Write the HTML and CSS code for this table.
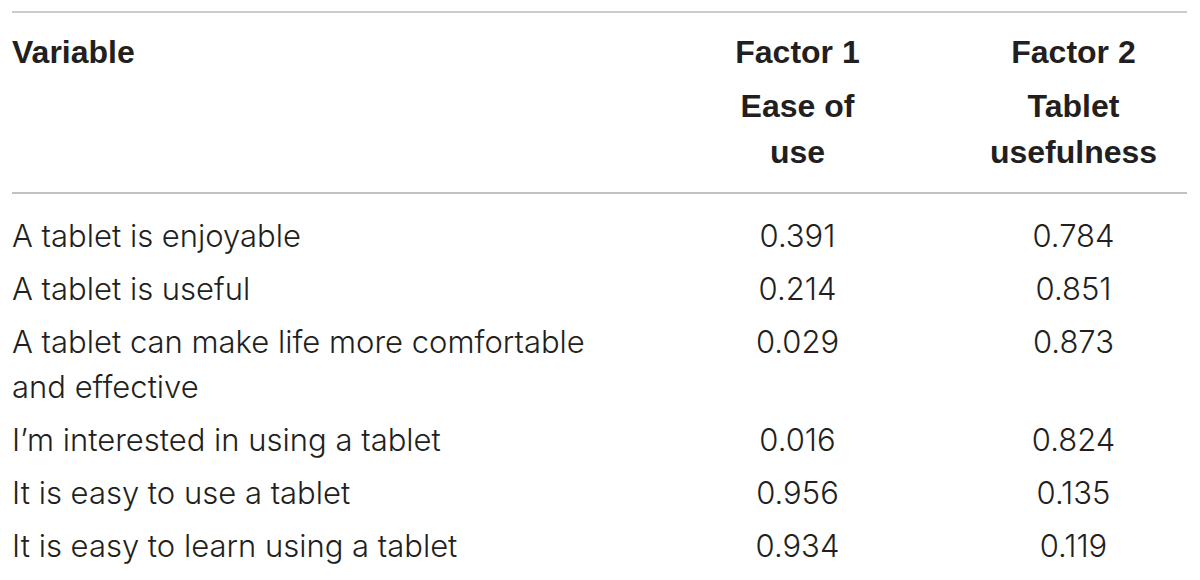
FILE: index.html
```html
<!DOCTYPE html>
<html lang="en">
<head>
<meta charset="utf-8">
<title>Factor loadings</title>
<link rel="stylesheet" href="styles.css">
</head>
<body>
<table class="loadings">
  <colgroup>
    <col class="col-var">
    <col class="col-f1">
    <col class="col-f2">
  </colgroup>
  <thead>
    <tr class="head-top">
      <th class="var">Variable</th>
      <th class="f1">Factor 1</th>
      <th class="f2">Factor 2</th>
    </tr>
    <tr class="head-sub">
      <th class="var"></th>
      <th class="f1">Ease of<br>use</th>
      <th class="f2">Tablet<br>usefulness</th>
    </tr>
  </thead>
  <tbody>
    <tr>
      <td class="var">A tablet is enjoyable</td>
      <td class="f1">0.391</td>
      <td class="f2">0.784</td>
    </tr>
    <tr>
      <td class="var">A tablet is useful</td>
      <td class="f1">0.214</td>
      <td class="f2">0.851</td>
    </tr>
    <tr>
      <td class="var">A tablet can make life more comfortable<br>and effective</td>
      <td class="f1">0.029</td>
      <td class="f2">0.873</td>
    </tr>
    <tr>
      <td class="var">I’m interested in using a tablet</td>
      <td class="f1">0.016</td>
      <td class="f2">0.824</td>
    </tr>
    <tr>
      <td class="var">It is easy to use a tablet</td>
      <td class="f1">0.956</td>
      <td class="f2">0.135</td>
    </tr>
    <tr>
      <td class="var">It is easy to learn using a tablet</td>
      <td class="f1">0.934</td>
      <td class="f2">0.119</td>
    </tr>
  </tbody>
</table>
</body>
</html>
```

FILE: styles.css
```css
html, body {
  margin: 0;
  padding: 0;
  background: #ffffff;
}

body {
  padding: 11px 13px 0 12px;
  color: #231f20;
}

.loadings {
  width: 1175px;
  border-collapse: collapse;
  table-layout: fixed;
}

.col-var { width: 648px; }
.col-f1 { width: 275px; }
.col-f2 { width: 252px; }

.loadings thead {
  border-top: 2px solid #cbcbcb;
  border-bottom: 2px solid #c2c2c2;
}

.loadings th {
  font-family: "Liberation Sans", Arial, sans-serif;
  font-weight: 700;
  font-size: 32px;
  line-height: 46px;
  vertical-align: top;
  padding: 4px 0;
}

.loadings td {
  font-family: Inter, "Liberation Sans", sans-serif;
  font-weight: 300;
  font-size: 31px;
  line-height: 45px;
  vertical-align: top;
  padding: 4px 0;
}

.loadings .var { text-align: left; }
.loadings .f1 { text-align: center; padding-left: 50px; padding-right: 50px; }
.loadings .f2 { text-align: center; padding-left: 51px; padding-right: 26px; }

.head-top th { padding-top: 16px; }
.head-sub th { padding-bottom: 17px; }

.loadings tbody tr:first-child td { padding-top: 19px; }
```
